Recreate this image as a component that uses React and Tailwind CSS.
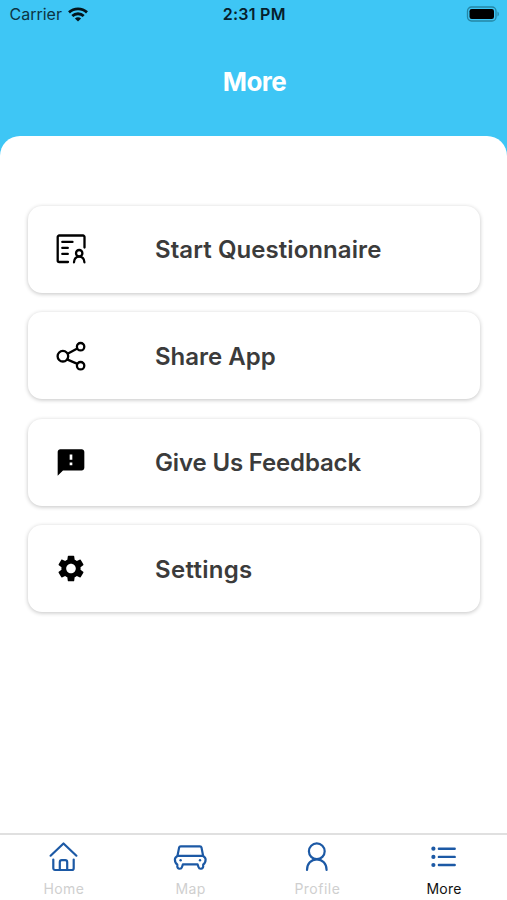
import React, { useState } from 'react';
import { MdFeedback, MdSettings } from 'react-icons/md';

const QuestionnaireIcon = () => (
  <svg width="32" height="32" viewBox="0 0 32 32" fill="none" stroke="#000" strokeWidth="2.3" strokeLinecap="round" strokeLinejoin="round">
    <path d="M13 29H4.2a1.5 1.5 0 0 1-1.5-1.5V4a1.5 1.5 0 0 1 1.5-1.5H28a1.5 1.5 0 0 1 1.5 1.5v10.6" />
    <path d="M7.3 8.9h10.2M7.3 14.9h5.5M7.3 20.900h5.5" />
    <circle cx="24.2" cy="20.2" r="3.2" />
    <path d="M19 29.3c.2-3.4 2.2-5.7 5.2-5.7s5 2.3 5.2 5.7" />
  </svg>
);

const ShareIcon = () => (
  <svg width="32" height="32" viewBox="0 0 32 32" fill="none" stroke="#000" strokeWidth="2.3">
    <circle cx="7.9" cy="16.2" r="5.3" />
    <circle cx="25.6" cy="6.7" r="3.7" />
    <circle cx="25.6" cy="25.7" r="3.7" />
    <path d="M12.6 13.7 22.3 8.5M12 19.4l10.400 4.500" />
  </svg>
);

const HomeIcon = () => (
  <svg width="32" height="32" viewBox="0 0 32 32" fill="none" stroke="#1c59a5" strokeWidth="2.2" strokeLinecap="round" strokeLinejoin="round">
    <path d="M3.6 14.7 16.5 2.5l12.9 12.2" />
    <path d="M6.3 18.5v8.8A1.7 1.7 0 0 0 8 29h17a1.7 1.7 0 0 0 1.7-1.7v-8.8" />
    <path d="M12.8 29v-7.8a2 2 0 0 1 2-2h3.4a2 2 0 0 1 2 2V29" />
  </svg>
);

const CarIcon = () => (
  <svg width="34" height="32" viewBox="0 0 34 32" fill="none" stroke="#1c59a5" strokeWidth="2.2" strokeLinecap="round" strokeLinejoin="round">
    <path d="M4.5 14.7 6.1 6.600A1.7 1.7 0 0 1 7.8 5.3h19a1.7 1.7 0 0 1 1.7 1.300l1.600 8.100" />
    <path d="M4.5 14.9H30c1.6.8 2.6 2 2.6 3.6 0 2.2-.7 4-2.4 5v2a2.400 2.400 0 0 1-4.700.5l-.9-2.700H9.900L9 26a2.400 2.400 0 0 1-4.700-.5v-2c-1.700-1-2.400-2.800-2.400-5 0-1.600 1-2.800 2.600-3.600z" />
    <circle cx="7.6" cy="19.3" r="1.2" fill="#1c59a5" stroke="none" />
    <circle cx="27" cy="19.3" r="1.2" fill="#1c59a5" stroke="none" />
  </svg>
);

const ProfileIcon = () => (
  <svg width="32" height="32" viewBox="0 0 32 32" fill="none" stroke="#1c59a5" strokeWidth="2.2" strokeLinecap="round">
    <circle cx="15.8" cy="10.3" r="7.9" />
    <path d="M6 28.9c0-6 4.2-10.6 9.8-10.6s9.8 4.6 9.8 10.6" />
  </svg>
);

const ListIcon = () => (
  <svg width="32" height="32" viewBox="0 0 32 32" fill="#1c59a5" stroke="#1c59a5" strokeWidth="2.4" strokeLinecap="round">
    <path d="M10.9 7.7h15.8M10.9 15.9h15.8M10.9 24h15.8" />
    <circle cx="5.4" cy="7.7" r="2.1" stroke="none" />
    <circle cx="5.4" cy="15.9" r="2.1" stroke="none" />
    <circle cx="5.4" cy="24" r="2.1" stroke="none" />
  </svg>
);

const menuItems = [
  { id: 'questionnaire', title: 'Start Questionnaire', spacing: 'tracking-[0.07px]', icon: <QuestionnaireIcon /> },
  { id: 'share', title: 'Share App', spacing: 'tracking-normal', icon: <ShareIcon /> },
  { id: 'feedback', title: 'Give Us Feedback', spacing: 'tracking-[-0.15px]', icon: <MdFeedback size={33} /> },
  { id: 'settings', title: 'Settings', spacing: 'tracking-[0.3px]', icon: <MdSettings size={33} /> },
];

const tabs = [
  { id: 'home', label: 'Home', spacing: 'tracking-[0.4px]', icon: <HomeIcon /> },
  { id: 'map', label: 'Map', spacing: 'tracking-[0.4px]', icon: <CarIcon /> },
  { id: 'profile', label: 'Profile', spacing: 'tracking-[0.5px]', icon: <ProfileIcon /> },
  { id: 'more', label: 'More', spacing: 'tracking-[0.3px]', icon: <ListIcon /> },
];

const StatusBar = () => (
  <div className="grid h-7 grid-cols-3 items-center pl-[9.5px] pr-2">
    <div className="flex items-center gap-[6px]">
      <span className="text-[16px] text-[#0c3444]">Carrier</span>
      <svg width="20" height="15" viewBox="0 0 20 15" fill="none" stroke="#03141b" strokeWidth="2.8">
        <path d="M1 5.4c5-4.600 13-4.600 18 0" />
        <path d="M4.3 9c3.2-3 8.200-3 11.400 0" />
        <path d="M10 14.5 6.9 11.4c1.7-1.6 4.500-1.600 6.200 0z" fill="#03141b" stroke="none" />
      </svg>
    </div>
    <span className="text-center text-[16px] font-semibold tracking-[0.25px] text-[#06202b]">2:31 PM</span>
    <svg className="justify-self-end" width="33" height="16" viewBox="0 0 33 16">
      <rect x="1.5" y="1" width="28.5" height="14" rx="4" fill="none" stroke="#2586a5" strokeWidth="1.3" />
      <rect x="3.5" y="3" width="24.5" height="10" rx="2.2" fill="#000" />
      <path d="M31.5 5.6c1.8.8 1.8 4 0 4.8z" fill="#2586a5" />
    </svg>
  </div>
);

const App = () => {
  const [activeTab, setActiveTab] = useState('more');

  return (
    <div className="flex h-[900px] w-[507px] flex-col overflow-hidden bg-[#3ec6f5] font-['Inter','Liberation_Sans',sans-serif]">
      <StatusBar />
      <header className="flex h-[107.5px] items-center justify-center pl-0.5">
        <h1 className="text-[26px] font-bold tracking-[-0.5px] text-white">More</h1>
      </header>

      <main className="flex flex-1 flex-col gap-[19.5px] rounded-t-[20px] bg-white px-[27.5px] pt-[70px]">
        {menuItems.map(item => (
          <button
            key={item.id}
            className="flex h-[87px] items-center rounded-[14px] bg-white pl-[27px] text-left shadow-[0_1px_4px_rgba(0,0,0,0.24)]"
          >
            <span className="flex w-8 justify-center text-black">{item.icon}</span>
            <span className={`ml-[68.5px] pt-0.5 text-[24px] font-semibold text-[#3b3b3b] ${item.spacing}`}>{item.title}</span>
          </button>
        ))}
      </main>

      <nav className="grid h-[67px] grid-cols-4 border-t-2 border-[#e0e0e0] bg-white">
        {tabs.map(tab => (
          <button key={tab.id} onClick={() => setActiveTab(tab.id)} className="flex flex-col items-center pt-[6px]">
            {tab.icon}
            <span className={`mt-[6px] pl-px text-[14px] leading-5 ${tab.spacing} ${activeTab === tab.id ? 'text-[#111111]' : 'text-[#cfcfcf]'}`}>
              {tab.label}
            </span>
          </button>
        ))}
      </nav>
    </div>
  );
};

export default App;
